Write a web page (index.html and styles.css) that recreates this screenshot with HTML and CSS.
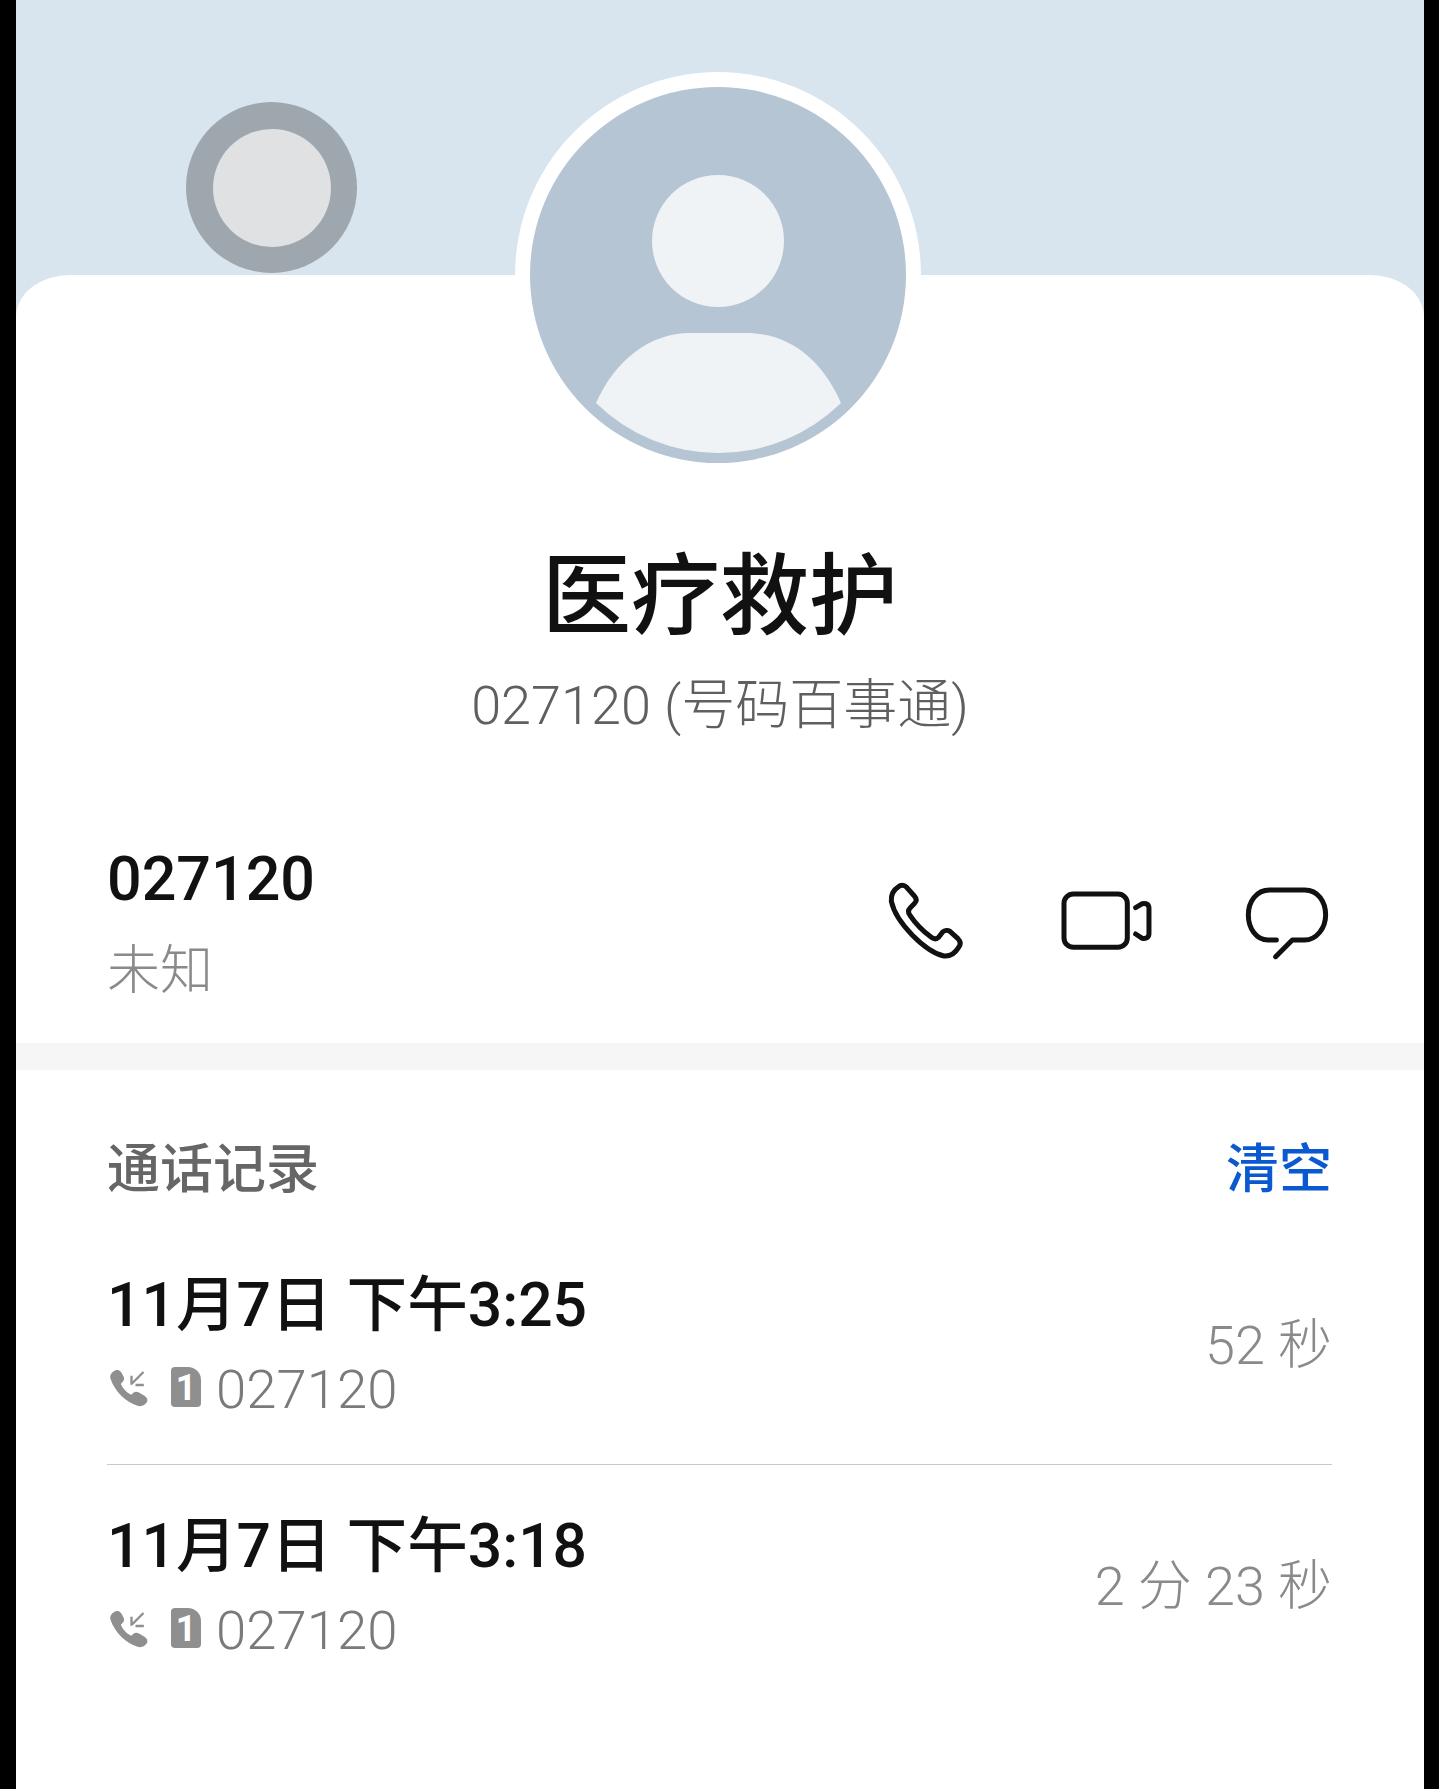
FILE: index.html
```html
<!DOCTYPE html>
<html lang="zh-CN">
<head>
    <meta charset="UTF-8">
    <meta name="viewport" content="width=device-width, initial-scale=1.0">
    <title>医疗救护</title>
    <link rel="stylesheet" href="styles.css">
</head>
<body>
    <div class="screen">
        <!-- Header with the two round pictures -->
        <div class="cover">
            <div class="float-dot"><div class="float-dot-inner"></div></div>
            <svg class="avatar" viewBox="515 72 406 406">
                <circle cx="718" cy="275" r="203" fill="#fff"/>
                <circle cx="718" cy="275" r="188" fill="#b5c5d3"/>
                <circle cx="718" cy="241" r="66" fill="#eff3f6"/>
                <path d="M596 403C615 360 650 333 690 333H746C790 333 822 360 841 403A175 175 0 0 1 596 403Z" fill="#eff3f6"/>
            </svg>
        </div>

        <div class="card">
            <div class="profile">
                <h1 class="name">医疗救护</h1>
                <p class="source">027120 (号码百事通)</p>
            </div>

            <!-- Number and actions -->
            <div class="contact">
                <div>
                    <div class="contact-number">027120</div>
                    <div class="contact-place">未知</div>
                </div>
                <div class="actions">
                    <svg class="icon-phone" viewBox="80 60 250 240">
                        <path d="M120 78C128 74 136 76 142 82L165 108C172 116 172 124 166 130L153 143C146 150 146 158 152 166C168 190 192 214 216 232C224 238 232 238 238 232L250 216C256 210 266 210 272 214L296 236C304 244 304 254 298 262C288 278 272 290 254 288C200 276 110 190 96 124C94 104 104 88 120 78Z"/>
                    </svg>
                    <svg class="icon-video" viewBox="600 60 280 240">
                        <rect x="615" y="102" width="190" height="160" rx="28"/>
                        <path d="M830 143L850 131Q870 128 870 145V220Q870 238 850 235L830 222"/>
                    </svg>
                    <svg class="icon-chat" viewBox="1150 60 262 240">
                        <path d="M1250 240H1225C1190 240 1166 205 1166 165C1166 125 1190 90 1230 90H1335C1375 90 1398 125 1398 165C1398 205 1370 240 1335 240H1298L1248 290"/>
                    </svg>
                </div>
            </div>

            <div class="band"></div>

            <!-- Call history -->
            <div class="history">
                <div class="history-head">
                    <span class="history-title">通话记录</span>
                    <span class="history-clear">清空</span>
                </div>
                <ul class="calls">
                    <li class="call">
                        <div>
                            <div class="call-time">11月7日 下午3:25</div>
                            <div class="call-info">
                                <svg class="icon-in" viewBox="55 80 125 120">
                                    <path class="solid" d="M78 87C86 84 92 88 96 96L102 108C104 114 102 118 98 122L93 127C98 140 110 153 124 160L130 155C135 151 140 150 146 153L164 163C172 168 175 176 171 183C165 192 155 197 143 193C108 182 75 150 62 112C59 102 66 91 78 87Z"/>
                                    <path class="line" d="M161 92L125 128M125 103V130M137 131H162"/>
                                </svg>
                                <span class="sim">1</span>
                                <span class="call-number">027120</span>
                            </div>
                        </div>
                        <div class="call-length">52 秒</div>
                    </li>
                    <li class="call">
                        <div>
                            <div class="call-time">11月7日 下午3:18</div>
                            <div class="call-info">
                                <svg class="icon-in" viewBox="55 80 125 120">
                                    <path class="solid" d="M78 87C86 84 92 88 96 96L102 108C104 114 102 118 98 122L93 127C98 140 110 153 124 160L130 155C135 151 140 150 146 153L164 163C172 168 175 176 171 183C165 192 155 197 143 193C108 182 75 150 62 112C59 102 66 91 78 87Z"/>
                                    <path class="line" d="M161 92L125 128M125 103V130M137 131H162"/>
                                </svg>
                                <span class="sim">1</span>
                                <span class="call-number">027120</span>
                            </div>
                        </div>
                        <div class="call-length">2 分 23 秒</div>
                    </li>
                </ul>
            </div>
        </div>
    </div>
</body>
</html>
```

FILE: styles.css
```css
html, body {
    margin: 0;
    padding: 0;
    background-color: #000;
}
body {
    font-family: Roboto, "Noto Sans CJK SC", sans-serif;
    height: 1789px;
    overflow: hidden;
}
.screen {
    margin: 0 15px 0 16px;
    height: 1789px;
    background-color: #d8e4ee;
    position: relative;
    overflow: hidden;
}
.cover {
    height: 275px;
}

/* Pictures that lie over the header and the card */
.float-dot {
    position: absolute;
    left: 170px;
    top: 102px;
    width: 171px;
    height: 171px;
    border-radius: 50%;
    background-color: #9ea6ae;
    display: flex;
    align-items: center;
    justify-content: center;
}
.float-dot-inner {
    width: 118px;
    height: 118px;
    border-radius: 50%;
    background-color: #dfe1e3;
}
.avatar {
    position: absolute;
    left: 499px;
    top: 72px;
    width: 406px;
    height: 406px;
    z-index: 2;
}

.card {
    background-color: #fff;
    border-radius: 54px 54px 0 0 / 42px 42px 0 0;
    height: 1514px;
}
.profile {
    padding-top: 264px;
    text-align: center;
}
.name {
    margin: 0;
    font-family: "Noto Sans CJK SC", sans-serif;
    font-size: 89px;
    font-weight: 500;
    line-height: 100px;
    color: #111;
}
.source {
    margin: 32px 0 0;
    font-size: 54px;
    font-weight: 300;
    line-height: 70px;
    color: #5f5f5f;
}

.contact {
    display: flex;
    justify-content: space-between;
    align-items: center;
    margin-top: 103px;
    padding: 0 92px 0 91px;
}
.contact-number {
    font-size: 61px;
    font-weight: 500;
    line-height: 70px;
    color: #111;
}
.contact-place {
    margin-top: 23px;
    font-size: 53px;
    font-weight: 300;
    line-height: 69px;
    color: #8a8a8a;
}
.actions {
    display: flex;
    gap: 90px;
    margin: -10px 2px 0 0;
}
.actions svg {
    height: 80px;
    fill: none;
    stroke: #111;
    stroke-width: 15;
    stroke-linecap: round;
    stroke-linejoin: round;
}
.icon-phone { width: 83.3px; }
.icon-video { width: 93.3px; }
.icon-chat { width: 87.3px; }

.band {
    margin-top: 37px;
    height: 27px;
    background-color: #f6f6f6;
}

.history {
    padding: 65px 92px 0 91px;
}
.history-head {
    display: flex;
    justify-content: space-between;
    line-height: 70px;
    font-size: 53px;
    font-weight: 500;
}
.history-title {
    color: #666;
}
.history-clear {
    color: #0a59d0;
}
.calls {
    list-style-type: none;
    margin: 19px 0 0;
    padding: 0;
}
.call {
    display: flex;
    justify-content: space-between;
    align-items: center;
    padding: 40px 0;
    border-bottom: 1px solid #c8c8c8;
}
.call:last-child {
    border-bottom: none;
}
.call-time {
    padding-top: 2px;
    font-size: 60.6px;
    font-weight: 500;
    line-height: 80px;
    color: #111;
}
.call-info {
    display: flex;
    align-items: center;
    margin-top: 8px;
    height: 70px;
}
.icon-in {
    width: 42px;
    height: 40px;
    margin: -2px 0 0 1px;
}
.sim {
    width: 30px;
    height: 40px;
    margin: -4px 0 0 21px;
    background-color: #8f8f8f;
    border-radius: 4px 13px 4px 4px;
    color: #fff;
    font-size: 36px;
    font-weight: 700;
    line-height: 42px;
    text-align: center;
}
.solid {
    fill: #8f8f8f;
}
.line {
    fill: none;
    stroke: #8f8f8f;
    stroke-width: 7;
}
.call-number {
    margin-left: 15px;
    font-size: 54.5px;
    font-weight: 300;
    color: #7a7a7a;
}
.call-length {
    margin-top: -7px;
    font-size: 54px;
    font-weight: 300;
    color: #8a8a8a;
}
```
